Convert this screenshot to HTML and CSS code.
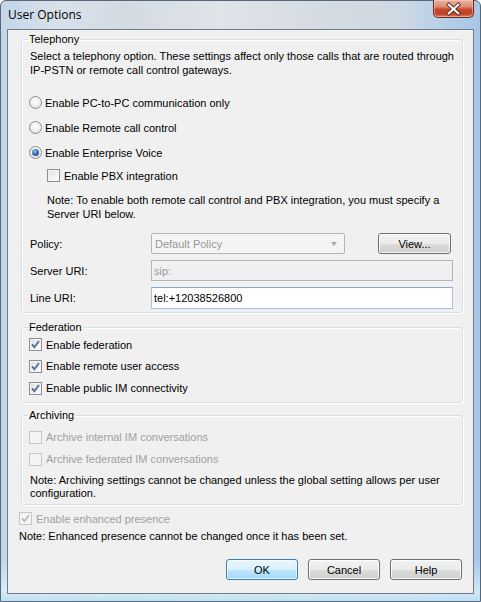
FILE: index.html
```html
<!DOCTYPE html>
<html>
<head>
<meta charset="utf-8">
<title>User Options</title>
<link rel="stylesheet" href="styles.css">
</head>
<body>
<div class="window">
  <div class="titlebar">
    <span class="title">User Options</span>
    <div class="close">
      <svg width="41" height="18" viewBox="0 0 41 18">
        <path d="M15.5 4.5 L25.5 13.5 M25.5 4.5 L15.5 13.5" stroke="#5a2418" stroke-width="4" stroke-linecap="square"/>
        <path d="M15.5 4.5 L25.5 13.5 M25.5 4.5 L15.5 13.5" stroke="#ffffff" stroke-width="2.2" stroke-linecap="square"/>
      </svg>
    </div>
  </div>
  <div class="client">
    <fieldset class="group telephony">
      <legend>Telephony</legend>
      <p class="intro">Select a telephony option. These settings affect only those calls that are routed through<br>IP-PSTN or remote call control gateways.</p>
      <div class="radios">
        <label class="row radio-row"><span class="radio"></span>Enable PC-to-PC communication only</label>
        <label class="row radio-row"><span class="radio"></span>Enable Remote call control</label>
        <label class="row radio-row"><span class="radio on"><span class="dot"></span></span>Enable Enterprise Voice</label>
        <label class="row pbx-row"><span class="check"></span>Enable PBX integration</label>
      </div>
      <p class="note pbx-note">Note: To enable both remote call control and PBX integration, you must specify a<br>Server URI below.</p>
      <div class="fields">
        <span class="flabel">Policy:</span>
        <div class="policy">
          <div class="combo"><span>Default Policy</span><span class="arrow"></span></div>
          <div class="button view">View...</div>
        </div>
        <span class="flabel">Server URI:</span>
        <div class="input disabled">sip:</div>
        <span class="flabel">Line URI:</span>
        <div class="input active">tel:+12038526800</div>
      </div>
    </fieldset>

    <fieldset class="group federation">
      <legend>Federation</legend>
      <label class="row fed-row r1"><span class="check checked"><svg width="13" height="13" viewBox="0 0 13 13"><path d="M3 6.3 L5.4 9.2 L10 3" fill="none" stroke="#5a6c9e" stroke-width="1.9"/></svg></span>Enable federation</label>
      <label class="row fed-row r2"><span class="check checked"><svg width="13" height="13" viewBox="0 0 13 13"><path d="M3 6.3 L5.4 9.2 L10 3" fill="none" stroke="#5a6c9e" stroke-width="1.9"/></svg></span>Enable remote user access</label>
      <label class="row fed-row r3"><span class="check checked"><svg width="13" height="13" viewBox="0 0 13 13"><path d="M3 6.3 L5.4 9.2 L10 3" fill="none" stroke="#5a6c9e" stroke-width="1.9"/></svg></span>Enable public IM connectivity</label>
    </fieldset>

    <fieldset class="group archiving">
      <legend>Archiving</legend>
      <label class="row arch-row disabled-text"><span class="check off"></span>Archive internal IM conversations</label>
      <label class="row arch-row disabled-text"><span class="check off"></span>Archive federated IM conversations</label>
      <p class="note arch-note">Note: Archiving settings cannot be changed unless the global setting allows per user<br>configuration.</p>
    </fieldset>

    <label class="row presence-row disabled-text"><span class="check off"><svg width="13" height="13" viewBox="0 0 13 13"><path d="M3 6.3 L5.4 9.2 L10 3" fill="none" stroke="#b8b8b8" stroke-width="1.7"/></svg></span>Enable enhanced presence</label>
    <p class="note presence-note">Note: Enhanced presence cannot be changed once it has been set.</p>

    <div class="buttons">
      <div class="button default">OK</div>
      <div class="button">Cancel</div>
      <div class="button">Help</div>
    </div>
  </div>
</div>
</body>
</html>
```

FILE: styles.css
```css
* { box-sizing: border-box; }
html, body { margin: 0; padding: 0; }
body {
  width: 481px;
  height: 602px;
  overflow: hidden;
  background: #ffffff;
  font-family: "Liberation Sans", Arial, sans-serif;
  font-size: 11px;
  color: #000;
}
.window {
  width: 481px;
  height: 602px;
  display: flex;
  flex-direction: column;
  border: 1px solid #56687a;
  border-radius: 6px 6px 0 0;
  background:
    linear-gradient(180deg, rgba(255,255,255,0) 0, rgba(255,255,255,0) 560px, rgba(220,240,252,0.8) 590px, rgba(190,225,245,0.9) 600px),
    linear-gradient(90deg, #c4d6e8 0, #d9e2ea 60px, #d2dae2 120px, #dfe4e9 220px, #d4dbe2 320px, #cfd9e3 400px, #b7cfe8 440px, #a9c6e6 481px);
}
.titlebar {
  height: 28px;
  display: flex;
  justify-content: space-between;
  align-items: flex-start;
}
.title {
  font-family: "Open Sans", "Liberation Sans", sans-serif;
  font-size: 12px;
  padding: 5px 0 0 7px;
  color: #000;
}
.close {
  width: 41px;
  height: 18px;
  margin-top: -1px;
  margin-right: 6px;
  border: 1px solid #6a2c20;
  border-top: none;
  border-radius: 0 0 5px 5px;
  background: linear-gradient(180deg, #eab3a2 0%, #dc8a72 40%, #c7482e 55%, #c0412a 80%, #d87c5c 100%);
  box-shadow: inset 0 0 0 1px rgba(255,220,200,0.45);
  display: flex;
}
.client {
  flex: 1;
  margin: 0 6px 7px 6px;
  border: 1px solid #6d7d8c;
  background: #f0f0f0;
  display: flex;
  flex-direction: column;
}
.group {
  margin: 0 10px 0 13px;
  padding: 0 8px 0 8px;
  border: 1px solid #d5dfe5;
  border-radius: 3px;
  box-shadow: inset 1px 1px 0 #fff, 1px 1px 0 #fff;
}
legend {
  padding: 0 1px;
  margin-left: -2px;
  line-height: 14px;
  height: 14px;
}
.telephony { margin-top: 2px; padding-top: 3px; padding-bottom: 4px; }
.intro { margin: 0; line-height: 14px; }
.radios { margin-top: 13px; display: flex; flex-direction: column; }
.row { display: flex; align-items: center; }
.radio-row { height: 25px; }
.pbx-row { height: 21px; padding-left: 17px; }
.note { margin: 0; line-height: 14px; }
.pbx-note { margin-top: 7px; padding-left: 17px; }
.radio {
  width: 13px;
  height: 13px;
  border-radius: 50%;
  border: 1px solid #8f8f8f;
  background: radial-gradient(circle at 50% 40%, #ffffff 0, #f4f4f4 35%, #dadada 100%);
  margin-left: -1px;
  margin-right: 3px;
  display: flex;
  align-items: center;
  justify-content: center;
  flex: none;
}
.radio .dot {
  width: 7px;
  height: 7px;
  border-radius: 50%;
  background: radial-gradient(circle at 40% 35%, #9ac6f2 0, #3d6fb6 45%, #1c3e7b 100%);
}
.check {
  width: 13px;
  height: 13px;
  border: 1px solid #8f8f8f;
  background: linear-gradient(135deg, #dcdcdc 0%, #f3f3f3 60%, #ffffff 100%);
  box-shadow: inset 0 0 0 1px #f4f4f4;
  margin-right: 4px;
  flex: none;
  display: flex;
  align-items: center;
  justify-content: center;
  position: relative;
}
.check svg { position: absolute; left: -1px; top: -1px; }
.check.off { border-color: #c6c6c6; background: #f4f4f4; box-shadow: none; }
.disabled-text { color: #a0a0a0; }

.fields {
  margin-top: 12px;
  display: grid;
  grid-template-columns: 121px 302px;
  grid-auto-rows: 21px;
  row-gap: 6px;
  align-items: center;
}
.policy { display: flex; align-items: center; height: 21px; }
.combo {
  width: 194px;
  height: 21px;
  border: 1px solid #b6b6b6;
  border-radius: 2px;
  background: #f4f4f4;
  color: #9a9a9a;
  display: flex;
  align-items: center;
  justify-content: space-between;
  padding: 0 7px 0 3px;
}
.arrow {
  width: 0; height: 0;
  border-left: 3.5px solid transparent;
  border-right: 3.5px solid transparent;
  border-top: 4px solid #a8a8a8;
}
.input {
  height: 21px;
  border: 1px solid #b0b0b0;
  display: flex;
  align-items: center;
  padding: 0 2px;
}
.input.disabled { background: #f0f0f0; color: #9a9a9a; border-color: #b5b5b5; }
.input.active { background: #fff; border-color: #a6c2e0; border-top-color: #8aa8c9; height: 22px; }

.button {
  width: 73px;
  height: 21px;
  border: 1px solid #707070;
  border-radius: 3px;
  background: linear-gradient(180deg, #f2f2f2 0%, #ebebeb 50%, #dddddd 51%, #cfcfcf 100%);
  box-shadow: inset 0 0 0 1px rgba(255,255,255,0.8);
  display: flex;
  align-items: center;
  justify-content: center;
}
.view { margin-left: 33px; }

.federation { margin-top: 7px; padding-bottom: 3px; }
.fed-row { margin-left: -1px; }
.fed-row.r1 { height: 21px; }
.fed-row.r2 { height: 22px; }
.fed-row.r3 { height: 22px; }
.archiving { margin-top: 5px; padding-top: 4px; padding-bottom: 4px; }
.arch-row { height: 22px; margin-left: -1px; }
.arch-note { margin-top: 4px; line-height: 13px; }

.presence-row { height: 21px; margin: 3px 0 0 11px; }
.presence-row .check { margin-right: 4px; }
.presence-note { margin-left: 11px; line-height: 14px; }

.buttons {
  display: flex;
  justify-content: flex-end;
  gap: 10px;
  margin-top: 16px;
  padding-right: 11px;
}
.buttons .button { width: 72px; }
.button.default {
  border-color: #3c7fb1;
  background: linear-gradient(180deg, #eaf6fd 0%, #d9f0fc 50%, #bee6fd 51%, #a7d9f5 100%);
  box-shadow: inset 0 0 0 1px rgba(255,255,255,0.7);
}
```
